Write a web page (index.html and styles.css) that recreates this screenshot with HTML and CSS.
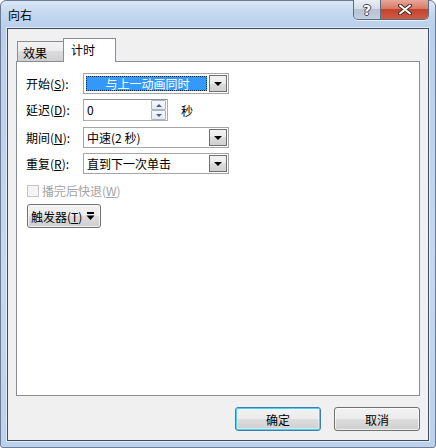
FILE: index.html
```html
<!DOCTYPE html>
<html lang="zh-CN">
<head>
  <meta charset="UTF-8">
  <title>向右</title>
  <link rel="stylesheet" href="styles.css">
</head>
<body>
  <div class="window">
    <div class="titlebar">
      <span class="title">向右</span>
      <div class="caption">
        <span class="cap help">?</span>
        <span class="cap close">
          <svg width="14" height="11" viewBox="0 0 14 11">
            <path d="M2 1.5 L12 9.5 M12 1.5 L2 9.5" stroke="#4a2a26" stroke-width="4" stroke-linecap="round"/>
            <path d="M2 1.5 L12 9.5 M12 1.5 L2 9.5" stroke="#fff" stroke-width="2" stroke-linecap="round"/>
          </svg>
        </span>
      </div>
    </div>

    <div class="client">
      <div class="tabs">
        <div class="tab">效果</div>
        <div class="tab active">计时</div>
      </div>

      <div class="panel">
        <div class="row">
          <label>开始(<u>S</u>):</label>
          <div class="combo focused">
            <span class="value">与上一动画同时</span>
            <span class="drop"><i></i></span>
          </div>
        </div>
        <div class="row spin-row">
          <label>延迟(<u>D</u>):</label>
          <div class="spin">
            <span class="value">0</span>
            <span class="spin-btns">
              <span class="sb up"><i></i></span>
              <span class="sb down"><i></i></span>
            </span>
          </div>
          <span class="unit">秒</span>
        </div>
        <div class="row row3">
          <label>期间(<u>N</u>):</label>
          <div class="combo">
            <span class="value">中速(2 秒)</span>
            <span class="drop"><i></i></span>
          </div>
        </div>
        <div class="row row4">
          <label>重复(<u>R</u>):</label>
          <div class="combo">
            <span class="value">直到下一次单击</span>
            <span class="drop"><i></i></span>
          </div>
        </div>
        <div class="check-row">
          <span class="checkbox"></span>
          <span class="check-label">播完后快退(<u>W</u>)</span>
        </div>
        <button class="trigger">
          <span>触发器(<u>T</u>)</span>
          <svg width="9" height="9" viewBox="0 0 9 9">
            <rect x="1" y="0" width="7" height="2" fill="#000"/>
            <path d="M0.5 3.5 H8.5 L4.5 8 Z" fill="#000"/>
          </svg>
        </button>
      </div>

      <div class="actions">
        <button class="btn default">确定</button>
        <button class="btn">取消</button>
      </div>
    </div>
  </div>
</body>
</html>
```

FILE: styles.css
```css
* {
  margin: 0;
  padding: 0;
  box-sizing: border-box;
}

body {
  width: 436px;
  height: 448px;
  font-family: "Noto Sans CJK SC", "Noto Sans", sans-serif;
  font-size: 12px;
  color: #000;
  background: #fff;
  overflow: hidden;
}

u {
  text-decoration: underline;
  text-underline-offset: 1px;
}

.window {
  height: 448px;
  display: flex;
  flex-direction: column;
  padding: 0 6px 6px;
  border: 1px solid #6b7d96;
  border-radius: 6px 6px 3px 3px;
  background: linear-gradient(180deg, #dae7f6 0, #c2d6ee 14px, #b9d0ec 27px, #c4d8f0 60%, #bcd2ec 100%);
}

.titlebar {
  flex: none;
  height: 27px;
  display: flex;
  align-items: flex-start;
}

.title {
  padding: 6px 0 0 1px;
  line-height: 15px;
  color: #000;
}

.caption {
  margin-left: auto;
  margin-top: -1px;
  display: flex;
  height: 20px;
  border: 1px solid #5c6b80;
  border-top: none;
  border-radius: 0 0 5px 5px;
  overflow: hidden;
  box-shadow: 0 1px 0 rgba(255, 255, 255, 0.6);
}

.cap {
  height: 19px;
  display: flex;
  align-items: center;
  justify-content: center;
}

.help {
  width: 27px;
  border-right: 1px solid #5c6b80;
  background: linear-gradient(180deg, #e9eef5 0, #d5dde8 45%, #b7c3d3 50%, #c2cfdf 100%);
  color: #fff;
  font-family: "DejaVu Sans", sans-serif;
  font-weight: bold;
  font-size: 14px;
  text-shadow: 1px 0 #3d4756, -1px 0 #3d4756, 0 1px #3d4756, 0 -1px #3d4756;
}

.close {
  width: 47px;
  background: linear-gradient(180deg, #e7a899 0, #d77a66 45%, #c4432d 50%, #cf5b45 100%);
}

.client {
  flex: 1;
  display: flex;
  flex-direction: column;
  padding: 9px 8px;
  background: #f0f0f0;
  border: 1px solid #3f4d61;
  box-shadow: 0 0 0 1px rgba(255, 255, 255, 0.55);
}

.tabs {
  display: flex;
  align-items: flex-end;
  padding-left: 1px;
}

.tab {
  width: 46px;
  height: 20px;
  padding: 4px 0 0 5px;
  line-height: 14px;
  border: 1px solid #898c95;
  border-right: none;
  border-bottom: none;
  background: linear-gradient(180deg, #f3f3f3 0, #ebebeb 50%, #dddddd 50%, #cfcfcf 100%);
}

.tab.active {
  width: 53px;
  height: 24px;
  margin-bottom: -1px;
  padding: 4px 0 0 7px;
  border-right: 1px solid #898c95;
  background: #fff;
  position: relative;
  z-index: 1;
}

.panel {
  flex: 1;
  display: flex;
  flex-direction: column;
  align-items: flex-start;
  padding: 11px 9px 0;
  background: #fff;
  border: 1px solid #898c95;
}

.row {
  display: flex;
  align-items: center;
  height: 21px;
}

.row label {
  width: 57px;
  line-height: 14px;
}

.spin-row {
  height: 22px;
  margin-top: 5px;
}

.row3 {
  margin-top: 6px;
}

.row4 {
  margin-top: 5px;
}

.combo {
  width: 146px;
  height: 21px;
  display: flex;
  align-items: center;
  padding: 1px;
  border: 1px solid #a5a5a5;
  background: #fff;
}

.combo .value {
  flex: 1;
  height: 17px;
  line-height: 17px;
  padding-left: 2px;
}

.combo.focused .value {
  margin: 0 1px 0 1px;
  height: 15px;
  line-height: 13px;
  text-align: center;
  color: #fff;
  background: #3399ff;
  border: 1px dotted #0c2a4c;
}

.drop {
  width: 18px;
  height: 17px;
  margin-left: 1px;
  display: flex;
  align-items: center;
  justify-content: center;
  border: 1px solid #707070;
  background: linear-gradient(180deg, #f2f2f2 0, #ebebeb 50%, #dddddd 50%, #cfcfcf 100%);
}

.drop i {
  width: 0;
  height: 0;
  border-left: 4px solid transparent;
  border-right: 4px solid transparent;
  border-top: 4px solid #000;
}

.spin {
  width: 85px;
  height: 22px;
  display: flex;
  align-items: center;
  border: 1px solid #abadb3;
  border-top-color: #8e8f8f;
  background: #fff;
}

.spin .value {
  flex: 1;
  padding-left: 3px;
  line-height: 14px;
}

.spin-btns {
  width: 15px;
  display: flex;
  flex-direction: column;
  gap: 0;
  margin-right: 1px;
}

.sb {
  height: 10px;
  display: flex;
  align-items: center;
  justify-content: center;
  border: 1px solid #a9b6c8;
  border-radius: 1px;
  background: linear-gradient(180deg, #f7f9fc 0, #e6ebf2 100%);
}

.sb i {
  width: 0;
  height: 0;
  border-left: 3px solid transparent;
  border-right: 3px solid transparent;
}

.sb.up i {
  border-bottom: 3px solid #4e5f7e;
}

.sb.down i {
  border-top: 3px solid #4e5f7e;
}

.unit {
  margin-left: 13px;
}

.check-row {
  display: flex;
  align-items: center;
  height: 13px;
  margin: 10px 0 0 1px;
}

.checkbox {
  width: 12px;
  height: 12px;
  border: 1px solid #c4c4c4;
  background: #f4f4f4;
}

.check-label {
  margin-left: 3px;
  color: #a3a3a3;
  line-height: 14px;
}

.trigger {
  width: 74px;
  height: 24px;
  margin: 7px 0 0 1px;
  display: flex;
  align-items: center;
  justify-content: space-between;
  padding: 0 5px 0 3px;
  font: inherit;
  border: 1px solid #707070;
  border-radius: 3px;
  background: linear-gradient(180deg, #f2f2f2 0, #ebebeb 50%, #dddddd 50%, #cfcfcf 100%);
  box-shadow: inset 0 0 0 1px rgba(255, 255, 255, 0.7);
}

.actions {
  display: flex;
  justify-content: flex-end;
  gap: 13px;
  margin-top: 11px;
}

.btn {
  width: 86px;
  height: 24px;
  font: inherit;
  color: #000;
  border: 1px solid #707070;
  border-radius: 3px;
  background: linear-gradient(180deg, #f2f2f2 0, #ebebeb 50%, #dddddd 50%, #cfcfcf 100%);
  box-shadow: inset 0 0 0 1px rgba(255, 255, 255, 0.7);
}

.btn.default {
  border-color: #3c7fb1;
  box-shadow: inset 0 0 0 1px #48d2f9, inset 0 0 0 2px rgba(255, 255, 255, 0.4);
}
```
